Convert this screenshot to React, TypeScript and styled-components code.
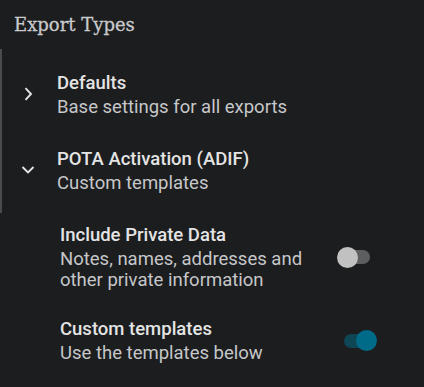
import React from "react";
import styled, { createGlobalStyle } from "styled-components";

const Global = createGlobalStyle`
  html, body { margin: 0; padding: 0; background: #1c1d1f; }
  body { font-family: Roboto, "Noto Sans", sans-serif; color: #e2e2e2; }
`;

const Page = styled.div`
  width: 424px;
  height: 387px;
  background: #1c1d1f;
  overflow: hidden;
  box-sizing: border-box;
`;

const Heading = styled.h2`
  margin: 0;
  padding: 13px 14px 0;
  font-family: "DejaVu Serif", "Liberation Serif", serif;
  font-weight: 400;
  font-size: 18px;
  color: #c9cacc;
  line-height: 24px;
  -webkit-text-stroke: 0.3px #c9cacc;
`;

const ExpanderGroup = styled.div`
  border-left: 2px solid #4a4b4e;
  margin-top: 12px;
  padding: 7px 0 5px;
`;

const ExpanderRow = styled.div`
  display: flex;
  align-items: center;
  height: 76px;
`;

const ChevronBox = styled.div`
  width: 55px;
  box-sizing: border-box;
  padding-left: 18px;
  display: flex;
  align-items: center;
`;

const TextBlock = styled.div`
  display: flex;
  flex-direction: column;
  flex: 1;
`;

const Title = styled.div`
  font-size: 18.5px;
  font-weight: 500;
  line-height: 24px;
  color: #e4e4e4;
`;

const Subtitle = styled.div`
  margin-top: 2px;
  font-size: 18.5px;
  font-weight: 400;
  line-height: 21px;
  color: #c6c7c9;
`;

const SettingList = styled.div`
  display: flex;
  flex-direction: column;
  gap: 26px;
  padding-top: 10px;
`;

const SettingRow = styled.div`
  display: flex;
  align-items: center;
  padding-left: 60px;
  padding-right: 54px;
`;

const Track = styled.div<{ $on: boolean }>`
  position: relative;
  width: 26px;
  height: 14px;
  border-radius: 7px;
  background: ${(p) => (p.$on ? "#0f4656" : "#5d5e60")};
`;

const Thumb = styled.div<{ $on: boolean }>`
  position: absolute;
  top: -3.5px;
  ${(p) => (p.$on ? "right: -7px;" : "left: -7px;")}
  width: 21px;
  height: 21px;
  border-radius: 50%;
  background: ${(p) => (p.$on ? "#006a89" : "#c1c1c1")};
`;

const Chevron = ({ down }: { down?: boolean }) => (
  <svg width="16" height="16" viewBox="0 0 16 16" fill="none">
    {down ? (
      <path d="M2.5 5 L8 10.5 L13.5 5" stroke="#e4e4e4" strokeWidth="1.9" />
    ) : (
      <path d="M5.5 2.2 L11 8 L5.5 13.8" stroke="#e4e4e4" strokeWidth="1.9" />
    )}
  </svg>
);

const Switch = ({ on }: { on: boolean }) => (
  <Track $on={on}>
    <Thumb $on={on} />
  </Track>
);

export default function App() {
  return (
    <Page>
      <Global />
      <Heading>Export Types</Heading>
      <ExpanderGroup>
        <ExpanderRow>
          <ChevronBox>
            <Chevron />
          </ChevronBox>
          <TextBlock>
            <Title>Defaults</Title>
            <Subtitle>Base settings for all exports</Subtitle>
          </TextBlock>
        </ExpanderRow>
        <ExpanderRow>
          <ChevronBox>
            <Chevron down />
          </ChevronBox>
          <TextBlock>
            <Title>POTA Activation (ADIF)</Title>
            <Subtitle>Custom templates</Subtitle>
          </TextBlock>
        </ExpanderRow>
      </ExpanderGroup>
      <SettingList>
        <SettingRow>
          <TextBlock>
            <Title>Include Private Data</Title>
            <Subtitle>
              Notes, names, addresses and
              <br />
              other private information
            </Subtitle>
          </TextBlock>
          <Switch on={false} />
        </SettingRow>
        <SettingRow>
          <TextBlock>
            <Title>Custom templates</Title>
            <Subtitle>Use the templates below</Subtitle>
          </TextBlock>
          <Switch on={true} />
        </SettingRow>
      </SettingList>
    </Page>
  );
}
